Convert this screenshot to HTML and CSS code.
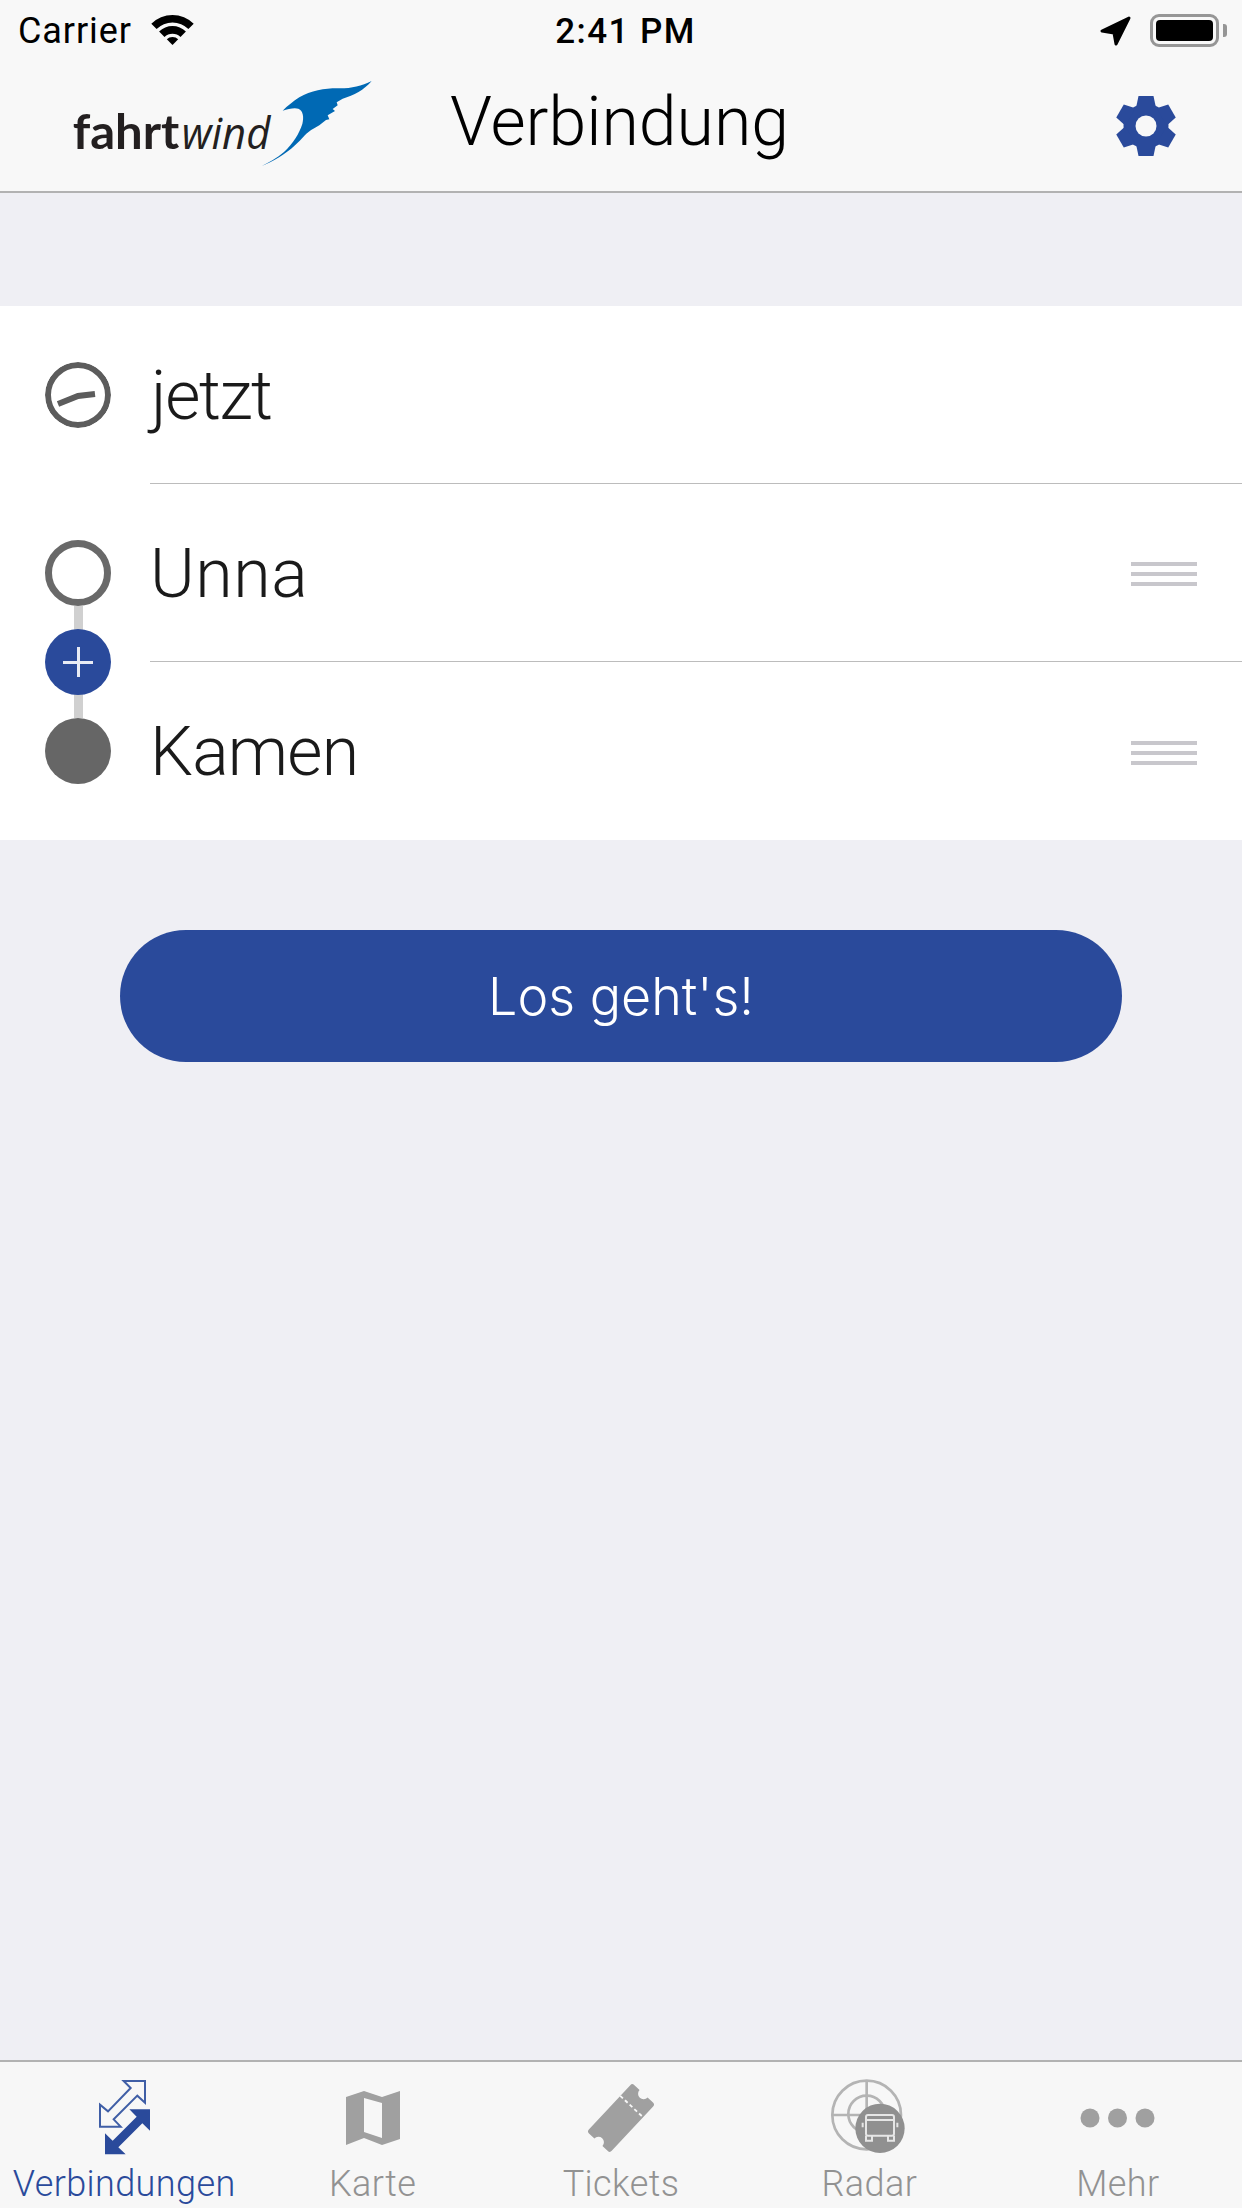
FILE: index.html
```html
<!DOCTYPE html>
<html lang="de">
<head>
<meta charset="utf-8">
<title>Verbindung</title>
<link rel="stylesheet" href="styles.css">
</head>
<body>
<div class="app">
  <header class="head">
    <div class="status">
      <div class="status-left">
        <span class="carrier">Carrier</span>
        <svg class="wifi" viewBox="-21.5 -30 43 30" width="43" height="30">
          <path d="M-21.2-21.2A30 30 0 0 1 21.2-21.2L15.9-15.9A22.5 22.5 0 0 0-15.9-15.9Z"/>
          <path d="M-13.4-13.4A19 19 0 0 1 13.4-13.4L8-8A11.3 11.3 0 0 0-8-8Z"/>
          <path d="M0 0L-5.7-5.7A8 8 0 0 1 5.7-5.7Z"/>
        </svg>
      </div>
      <span class="time">2:41 PM</span>
      <div class="status-right">
        <svg class="loc" viewBox="1100 15 33 31" width="33" height="31">
          <path d="M1130 18L1103 31L1115 33L1117 44Z"/>
        </svg>
        <div class="battery"><div class="battery-fill"></div></div>
        <div class="battery-nub"></div>
      </div>
    </div>
    <div class="nav">
      <svg class="logo" viewBox="0 0 990 360" width="330" height="120">
        <text class="logo-bold" x="68" y="267" textLength="320" lengthAdjust="spacingAndGlyphs">fahrt</text>
        <text class="logo-ital" x="395" y="267" textLength="266" lengthAdjust="spacingAndGlyphs">wind</text>
        <path class="wing" d="M965 63C935 78 905 85 870 85C830 84 785 90 748 112C730 124 712 138 698 152C715 146 735 142 745 146C760 152 762 172 757 192C748 220 730 250 702 276C682 294 655 308 635 318C668 306 705 284 735 256C755 238 772 214 790 206L808 196L828 180L838 178L833 166L855 153L848 147L863 136L860 127L878 116C912 106 942 90 965 63Z"/>
      </svg>
      <h1 class="title">Verbindung</h1>
      <svg class="gear" viewBox="-30 -30 60 60" width="60" height="60">
        <g class="gear-body">
          <circle r="22.5"/>
          <polygon points="-7.5,-30 7.5,-30 10,-18 -10,-18"/>
          <polygon points="-7.5,-30 7.5,-30 10,-18 -10,-18" transform="rotate(60)"/>
          <polygon points="-7.5,-30 7.5,-30 10,-18 -10,-18" transform="rotate(120)"/>
          <polygon points="-7.5,-30 7.5,-30 10,-18 -10,-18" transform="rotate(180)"/>
          <polygon points="-7.5,-30 7.5,-30 10,-18 -10,-18" transform="rotate(240)"/>
          <polygon points="-7.5,-30 7.5,-30 10,-18 -10,-18" transform="rotate(300)"/>
        </g>
        <circle class="gear-hole" r="10.5"/>
      </svg>
    </div>
  </header>

  <main class="main">
    <section class="list">
      <div class="rail"></div>
      <div class="row">
        <svg class="marker" viewBox="0 0 66 66" width="66" height="66">
          <circle class="clock-ring" cx="33" cy="33" r="30"/>
          <path class="clock-hand" d="M13 42L33 34L50 32"/>
        </svg>
        <div class="row-body"><span class="row-text row-text-jetzt">jetzt</span></div>
      </div>
      <div class="row">
        <div class="marker marker-open"></div>
        <div class="row-body">
          <span class="row-text row-text-unna">Unna</span>
          <div class="handle"><i></i><i></i><i></i></div>
        </div>
      </div>
      <div class="row">
        <div class="marker marker-full"></div>
        <div class="row-body row-body-last">
          <span class="row-text row-text-kamen">Kamen</span>
          <div class="handle"><i></i><i></i><i></i></div>
        </div>
      </div>
      <div class="add"></div>
    </section>
    <button class="go" type="button">Los geht's!</button>
  </main>

  <nav class="tabs">
    <div class="tab tab-active">
      <svg class="tab-icon" viewBox="64 2070 120 100" width="120" height="100">
        <g transform="translate(80 2070) scale(.33333)">
          <path class="arrow-line" d="M195 33H131L152 54L84 124L60 104V170H122L101 148L172 77L195 98Z"/>
          <path class="arrow-full" d="M210 118H148L170 140L98 212L75 190V253H137L115 232L187 160L210 182Z"/>
        </g>
      </svg>
      <span class="tab-label">Verbindungen</span>
    </div>
    <div class="tab">
      <svg class="tab-icon" viewBox="313 2070 120 100" width="120" height="100">
        <path class="grey" fill-rule="evenodd" d="M346 2097L364 2091L382 2097L400 2091V2139L382 2145L364 2138L346 2145ZM364 2098V2132L382 2138V2103Z"/>
      </svg>
      <span class="tab-label">Karte</span>
    </div>
    <div class="tab">
      <svg class="tab-icon" viewBox="561 2070 120 100" width="120" height="100">
        <g transform="translate(621 2118) rotate(-47) scale(.92)">
          <path class="grey" d="M-33-17H33Q36-17 36-14V-6A6 6 0 0 0 36 6V14Q36 17 33 17H-33Q-36 17-36 14V6A6 6 0 0 0-36-6V-14Q-36-17-33-17Z"/>
          <path class="ticket-cut" d="M17-17V17"/>
        </g>
      </svg>
      <span class="tab-label">Tickets</span>
    </div>
    <div class="tab">
      <svg class="tab-icon" viewBox="809 2070 120 100" width="120" height="100">
        <g transform="translate(790 2070) scale(.33333)">
          <g class="radar-lines">
            <circle cx="230" cy="135" r="103"/>
            <circle cx="230" cy="132" r="55"/>
            <path d="M230 32V120M127 135H210"/>
          </g>
          <circle class="radar-disc" cx="270" cy="175" r="74"/>
          <g class="bus">
            <rect x="228" y="135" width="84" height="62" rx="6"/>
            <path d="M228 150H312M218 158V172M322 158V172M228 197V212H246V197M294 197V212H312V197"/>
          </g>
        </g>
      </svg>
      <span class="tab-label">Radar</span>
    </div>
    <div class="tab">
      <svg class="tab-icon" viewBox="1058 2070 120 100" width="120" height="100">
        <circle class="grey" cx="1090" cy="2118" r="9.5"/>
        <circle class="grey" cx="1117.5" cy="2118" r="9.5"/>
        <circle class="grey" cx="1145" cy="2118" r="9.5"/>
      </svg>
      <span class="tab-label">Mehr</span>
    </div>
  </nav>
</div>
</body>
</html>
```
FILE: styles.css
```css
* { box-sizing: border-box; }
html, body { margin: 0; padding: 0; }
body { font-family: Roboto, "Liberation Sans", sans-serif; background: #efeff4; }
.app { width: 1242px; height: 2208px; display: flex; flex-direction: column; overflow: hidden; }

.head { background: #f8f8f8; border-bottom: 2px solid #b2b2b2; height: 193px; flex: none; }
.status { height: 60px; display: grid; grid-template-columns: 1fr auto 1fr; align-items: center; padding: 2px 15px 0 18px; }
.status-left { display: flex; align-items: center; gap: 19px; }
.carrier { font-size: 36px; font-weight: 400; color: #000; letter-spacing: 0.9px; }
.wifi { fill: #000; margin-top: -2px; }
.time { font-size: 35px; font-weight: 500; color: #000; letter-spacing: 1.4px; margin-left: 6px; }
.status-right { display: flex; align-items: center; justify-content: flex-end; margin-top: -2px; }
.loc { fill: #000; stroke: #000; stroke-width: 3; stroke-linejoin: round; margin-right: 18px; }
.battery { width: 69px; height: 33px; border: 3px solid #969696; border-radius: 9px; padding: 3px; }
.battery-fill { width: 100%; height: 100%; background: #000; border-radius: 4px; }
.battery-nub { width: 4px; height: 13px; background: #969696; margin-left: 4px; border-radius: 0 3px 3px 0; }

.nav { height: 131px; display: grid; grid-template-columns: 1fr auto 1fr; align-items: center; }
.logo { justify-self: start; margin-left: 50px; align-self: start; }
.logo-bold { font-family: Lato, sans-serif; font-weight: 700; font-size: 146px; fill: #231f20; }
.logo-ital { font-family: "Open Sans", sans-serif; font-style: italic; font-weight: 400; font-size: 134px; fill: #231f20; }
.wing { fill: #0069b4; }
.title { margin: -8px 0 0 -3px; font-size: 68px; font-weight: 300; color: #000; line-height: 1; }
.gear { justify-self: end; margin-right: 66px; margin-top: 0; }
.gear-body { fill: #2a4a9b; }
.gear-hole { fill: #f8f8f8; }

.main { flex: 1; padding-top: 113px; display: flex; flex-direction: column; }
.list { position: relative; background: #fff; }
.rail { position: absolute; left: 74px; top: 300px; width: 9px; height: 112px; background: #d0d0d0; }
.row { display: flex; align-items: center; height: 178px; padding-left: 45px; gap: 39px; position: relative; }
.marker { width: 66px; height: 66px; flex: none; border-radius: 50%; }
.clock-ring { fill: none; stroke: #5c5c5c; stroke-width: 6; }
.clock-hand { fill: none; stroke: #5c5c5c; stroke-width: 6; }
.marker-open { border: 7px solid #696969; background: #fff; }
.marker-full { background: #666; }
.row-body { flex: 1; align-self: stretch; display: flex; align-items: center; justify-content: space-between; border-bottom: 1px solid #bcbcbc; padding-right: 45px; }
.row-body-last { border-bottom: 0; }
.row-text { font-size: 68px; font-weight: 300; color: #1a1a1a; line-height: 1; margin-top: 2px; }
.row-text-jetzt { letter-spacing: -1.4px; margin-left: 1px; }
.row-text-unna { letter-spacing: 0.6px; }
.row-text-kamen { letter-spacing: -0.8px; margin-top: 2px; }
.handle { display: flex; flex-direction: column; gap: 6px; width: 66px; margin-top: 3px; }
.handle i { display: block; height: 4px; background: #c8c7cc; }
.add { position: absolute; left: 45px; top: 323px; width: 66px; height: 66px; border-radius: 50%; background: #2a4a9b; }
.add::before, .add::after { content: ""; position: absolute; background: #e8ebf4; }
.add::before { left: 18px; top: 31.5px; width: 30px; height: 3px; }
.add::after { left: 31.5px; top: 18px; width: 3px; height: 30px; }

.go { display: block; margin: 90px 0 0 120px; width: 1002px; height: 132px; border: 0; border-radius: 66px; background: #2a4a9b; color: #fff; font-family: Inter, Roboto, sans-serif; font-size: 52px; font-weight: 300; }

.tabs { flex: none; height: 148px; display: grid; grid-template-columns: repeat(5, 1fr); background: #f7f7f7; border-top: 2px solid #b2b2b2; padding-top: 8px; }
.tab { display: flex; flex-direction: column; align-items: center; }
.tab-icon { flex: none; }
.tab-label { font-size: 36px; font-weight: 300; color: #929292; line-height: 1; margin-top: -4px; white-space: nowrap; letter-spacing: 0.4px; }
.tab-active .tab-label { color: #2a4a9b; }
.grey { fill: #a0a0a0; }
.arrow-line { fill: #f7f7f7; stroke: #3f5ea6; stroke-width: 6; }
.arrow-full { fill: #2a4a9b; }
.ticket-cut { fill: none; stroke: #f7f7f7; stroke-width: 2; stroke-dasharray: 4 3; }
.radar-lines { fill: none; stroke: #b4b4b4; stroke-width: 8; }
.radar-disc { fill: #909090; }
.bus { fill: none; stroke: #e6e6e6; stroke-width: 6; }
```
